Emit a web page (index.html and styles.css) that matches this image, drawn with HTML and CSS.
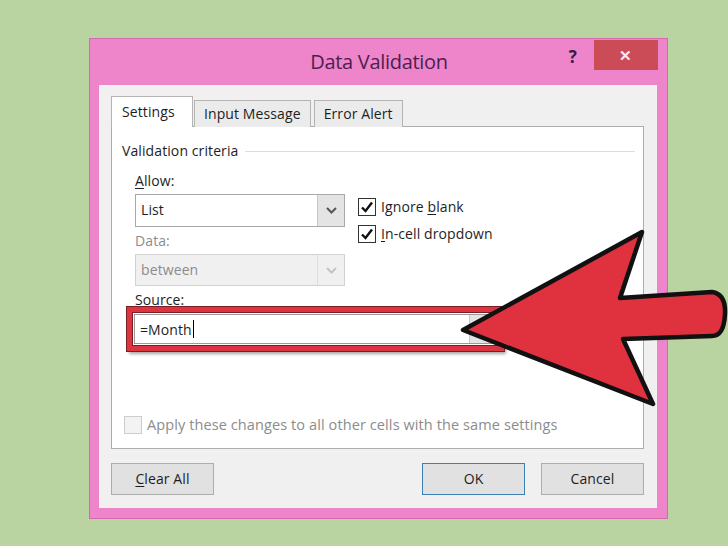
FILE: index.html
```html
<!DOCTYPE html>
<html>
<head>
  <meta charset="utf-8">
  <title>Data Validation</title>
  <link rel="stylesheet" href="styles.css">
</head>
<body>
  <div class="dialog">
    <header class="titlebar">
      <span class="title">Data Validation</span>
      <span class="help">?</span>
      <span class="close">&#x2715;</span>
    </header>

    <div class="dialog-body">
      <nav class="tabs">
        <span class="tab active">Settings</span>
        <span class="tab">Input Message</span>
        <span class="tab">Error Alert</span>
      </nav>

      <section class="panel">
        <div class="group-title">
          <span>Validation criteria</span>
          <span class="group-line"></span>
        </div>

        <div class="criteria">
          <div class="fields">
            <label class="label"><u>A</u>llow:</label>
            <div class="select">
              <span class="select-value">List</span>
              <span class="select-btn">
                <svg width="11" height="7" viewBox="0 0 11 7"><path d="M1 1 L5.5 5.5 L10 1" fill="none" stroke="#555" stroke-width="2"/></svg>
              </span>
            </div>
            <label class="label disabled">Data:</label>
            <div class="select disabled">
              <span class="select-value">between</span>
              <span class="select-btn">
                <svg width="11" height="7" viewBox="0 0 11 7"><path d="M1 1 L5.5 5.5 L10 1" fill="none" stroke="#c4c4c4" stroke-width="2"/></svg>
              </span>
            </div>
          </div>

          <div class="checks">
            <div class="check-row">
              <span class="checkbox">
                <svg width="14" height="14" viewBox="0 0 14 14"><path d="M2 7.5 L5.5 11 L12 2.5" fill="none" stroke="#111" stroke-width="2.4"/></svg>
              </span>
              <span>Ignore <u>b</u>lank</span>
            </div>
            <div class="check-row">
              <span class="checkbox">
                <svg width="14" height="14" viewBox="0 0 14 14"><path d="M2 7.5 L5.5 11 L12 2.5" fill="none" stroke="#111" stroke-width="2.4"/></svg>
              </span>
              <span><u>I</u>n-cell dropdown</span>
            </div>
          </div>
        </div>

        <div class="source">
          <label class="label">Source:</label>
          <div class="highlight">
            <div class="source-input">
              <span class="source-value">=Month</span>
              <span class="caret"></span>
              <span class="source-btn"></span>
            </div>
          </div>
        </div>

        <div class="apply-row">
          <span class="checkbox disabled"></span>
          <span>Apply these changes to all other cells with the same settings</span>
        </div>
      </section>

      <footer class="buttons">
        <span class="button"><u>C</u>lear All</span>
        <span class="spacer"></span>
        <span class="button default">OK</span>
        <span class="button">Cancel</span>
      </footer>
    </div>
  </div>

  <svg class="arrow" width="728" height="546" viewBox="0 0 728 546">
    <path d="M463 330 L642 232 L620 298 L712 292 Q726 294 725 314 Q724 336 712 336 L623 339 L653 404 Z"
          fill="#e0313f" stroke="#111" stroke-width="4.5" stroke-linejoin="round"/>
  </svg>
</body>
</html>
```

FILE: styles.css
```css
body {
  margin: 0;
  width: 728px;
  height: 546px;
  overflow: hidden;
  background-color: #b9d3a1;
  font-family: "Open Sans", "Noto Sans", sans-serif;
  font-size: 14px;
  letter-spacing: 0.1px;
  color: #1e1e1e;
}

u {
  text-decoration-thickness: 1px;
  text-underline-offset: 2px;
}

.dialog {
  display: flex;
  flex-direction: column;
  box-sizing: border-box;
  width: 577px;
  height: 479px;
  margin: 39px 0 0 90px;
  padding: 0 10px 10px 9px;
  background-color: #ee84c9;
  box-shadow: 0 0 0 1px #d46aae;
}

.titlebar {
  position: relative;
  display: flex;
  align-items: flex-start;
  justify-content: center;
  height: 46px;
  flex: none;
}

.title {
  margin-top: 9px;
  margin-left: 2px;
  color: #4d1f4f;
  font-size: 20px;
  letter-spacing: -0.3px;
}

.help {
  position: absolute;
  top: 6px;
  right: 80px;
  color: #3a1a3e;
  font-size: 17px;
  font-weight: bold;
}

.close {
  position: absolute;
  top: 1px;
  right: -1px;
  width: 64px;
  height: 30px;
  line-height: 30px;
  text-align: center;
  background-color: #cb4b56;
  color: #fbe9ec;
  font-size: 15px;
  font-weight: bold;
}

.dialog-body {
  display: flex;
  flex-direction: column;
  flex: 1;
  padding: 12px 13px 12px 12px;
  background-color: #f0f0f0;
}

.tabs {
  display: flex;
  align-items: flex-end;
  height: 30px;
  margin-bottom: -1px;
  position: relative;
  z-index: 1;
}

.tab {
  box-sizing: border-box;
  height: 27px;
  margin-right: 2px;
  padding: 0 9px;
  line-height: 25px;
  border: 1px solid #b4b4b4;
  border-bottom: none;
  background-color: #ebebeb;
}

.tab.active {
  height: 31px;
  width: 82px;
  margin-right: 0;
  padding: 0 10px;
  line-height: 29px;
  background-color: #fff;
}

.tab + .tab {
  margin-left: 1px;
}

.panel {
  display: flex;
  flex-direction: column;
  height: 323px;
  box-sizing: border-box;
  padding: 14px 10px 14px 10px;
  border: 1px solid #adadad;
  background-color: #fff;
}

.group-title {
  display: flex;
  align-items: center;
  height: 20px;
  line-height: 20px;
}

.group-line {
  flex: 1;
  height: 1px;
  margin-left: 7px;
  margin-right: -2px;
  background-color: #dcdcdc;
}

.criteria {
  display: flex;
  margin-top: 10px;
  margin-left: 13px;
}

.fields {
  display: flex;
  flex-direction: column;
  width: 210px;
}

.label {
  display: block;
  height: 20px;
  line-height: 20px;
}

.label.disabled {
  color: #8c8c8c;
}

.select {
  display: flex;
  box-sizing: border-box;
  height: 33px;
  margin-top: 3px;
  margin-bottom: 4px;
  border: 1px solid #a9a9a9;
  background-color: #fff;
}

.select.disabled {
  height: 32px;
  border-color: #d2d2d2;
  background-color: #f0f0f0;
  color: #8c8c8c;
}

.select-value {
  flex: 1;
  padding-left: 5px;
  line-height: 30px;
}

.select-btn {
  display: flex;
  align-items: center;
  justify-content: center;
  width: 26px;
  border-left: 1px solid #c8c8c8;
  background-color: #e4e4e4;
}

.select.disabled .select-btn {
  border-left-color: #dcdcdc;
  background-color: #f0f0f0;
}

.checks {
  display: flex;
  flex-direction: column;
  margin-top: 22px;
  margin-left: 13px;
}

.check-row {
  display: flex;
  align-items: center;
  height: 27px;
}

.checkbox {
  display: flex;
  align-items: center;
  justify-content: center;
  box-sizing: border-box;
  width: 18px;
  height: 18px;
  margin-right: 5px;
  border: 1px solid #333;
  background-color: #fff;
}

.checkbox.disabled {
  border-color: #cdcdcd;
  background-color: #f3f3f3;
}

.source {
  display: flex;
  flex-direction: column;
  margin-left: 13px;
}

.highlight {
  width: 363px;
  margin-top: -3px;
  margin-left: -8px;
  padding: 2px;
  border: 5px solid #dc3441;
  box-shadow: 0 0 0 1px #7c1d26, inset 0 0 0 1px #7c1d26, 2px 3px 3px rgba(0, 0, 0, 0.35);
}

.source-input {
  display: flex;
  align-items: center;
  box-sizing: border-box;
  height: 30px;
  border: 1px solid #9a9a9a;
  background-color: #fff;
}

.source-value {
  padding-left: 5px;
}

.caret {
  width: 1px;
  height: 18px;
  margin-left: 1px;
  background-color: #000;
}

.source-btn {
  align-self: stretch;
  width: 26px;
  margin-left: auto;
  border-left: 1px solid #c8c8c8;
  background-color: #e4e4e4;
}

.apply-row {
  display: flex;
  align-items: center;
  margin-top: auto;
  margin-left: 2px;
  color: #8c8c8c;
  font-size: 14.5px;
}

.buttons {
  display: flex;
  margin-top: 14px;
}

.button {
  box-sizing: border-box;
  width: 103px;
  height: 32px;
  line-height: 30px;
  text-align: center;
  border: 1px solid #adadad;
  background-color: #e1e1e1;
}

.button.default {
  border-color: #3c7fb1;
  margin-right: 16px;
}

.spacer {
  flex: 1;
}

.arrow {
  position: absolute;
  top: 0;
  left: 0;
}
```
